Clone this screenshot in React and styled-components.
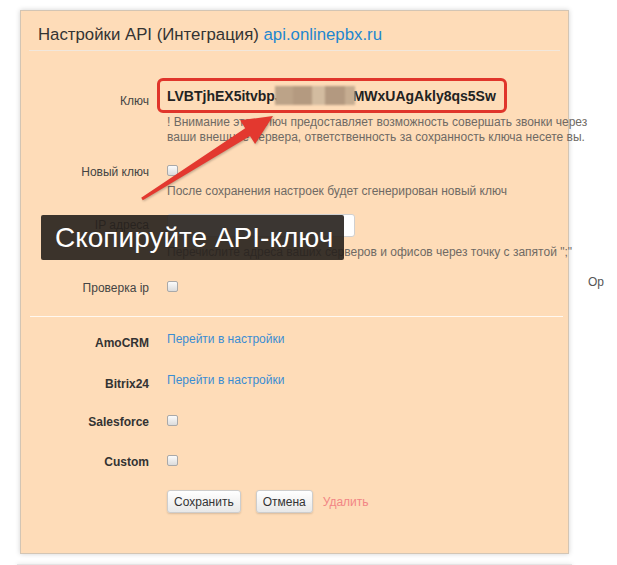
import React from 'react';
import styled, { createGlobalStyle } from 'styled-components';

const GlobalStyle = createGlobalStyle`
  html, body {
    margin: 0;
    padding: 0;
    background: #fff;
    overflow: hidden;
  }
  body {
    font-family: "Liberation Sans", Arial, sans-serif;
    color: #444;
  }
`;

const Page = styled.div`
  display: flex;
  align-items: flex-start;
  padding: 10px 0 0 20px;
  height: 565px;
  box-sizing: border-box;
`;

const Column = styled.div`
  display: flex;
  flex-direction: column;
`;

const Panel = styled.div`
  position: relative;
  width: 549px;
  height: 544px;
  box-sizing: border-box;
  background-color: #fedcb8;
  border: 1px solid #d3c5b4;
  box-shadow: 0 0 5px rgba(0, 0, 0, 0.18);
  display: flex;
  flex-direction: column;
`;

const NextPanel = styled.div`
  width: 555px;
  height: 20px;
  margin: 10px 0 0 -3px;
  background: #fafafa;
  border-top: 1px solid #e4e4e4;
  box-shadow: 0 0 5px rgba(0, 0, 0, 0.1);
`;

const Header = styled.div`
  margin: 0 8px;
  padding: 14px 0 5px 9px;
  border-bottom: 1px solid #f1e7dc;
  font-size: 16.8px;
  line-height: 20px;
  color: #333;

  a {
    color: #1f87cf;
    text-decoration: none;
  }
`;

const Row = styled.div`
  display: grid;
  grid-template-columns: 128px 1fr;
  column-gap: 18px;
  align-items: start;
  margin-top: ${(p) => p.$mt || 0}px;
`;

const Label = styled.div`
  text-align: right;
  font-size: 12px;
  line-height: 14px;
  padding-top: ${(p) => p.$pt || 0}px;
  font-weight: ${(p) => (p.$bold ? 'bold' : 'normal')};
  color: ${(p) => (p.$bold ? '#333' : '#444')};
`;

const KeyBox = styled.div`
  position: relative;
  margin-left: -10px;
  width: 350px;
  height: 35px;
  box-sizing: border-box;
  border: 3px solid #e0352b;
  border-radius: 6px;
  padding-left: 7px;
  display: flex;
  align-items: center;
  font-size: 14px;
  font-weight: bold;
  color: #222;
  white-space: nowrap;
`;

const Blur = styled.span`
  display: inline-block;
  width: 80px;
  height: 19px;
  margin-left: -8px;
  margin-right: -2px;
  background: linear-gradient(
    90deg,
    #bca388 0 22%,
    #b49a80 22% 46%,
    #d3bca0 46% 62%,
    #b39980 62% 88%,
    #c6ad91 88%
  );
  filter: blur(0.8px);
`;

const Help = styled.div`
  margin-top: ${(p) => p.$mt || 0}px;
  margin-left: 146px;
  font-size: 12px;
  line-height: 15px;
  color: #6f6a64;
  white-space: nowrap;
`;

const Check = styled.span`
  display: block;
  width: 11px;
  height: 11px;
  box-sizing: border-box;
  border: 1px solid #a9a9a9;
  border-radius: 2px;
  background: linear-gradient(#fbfbfb, #dcdcdc);
`;

const TextInput = styled.div`
  width: 188px;
  height: 23px;
  box-sizing: border-box;
  background: #fff;
  border: 1px solid #d0d0d0;
  border-radius: 3px;
`;

const Divider = styled.div`
  margin: ${(p) => p.$mt || 0}px 5px 0 9px;
  height: 1px;
  background: #fff8f0;
`;

const LinkText = styled.a`
  font-size: 12px;
  line-height: 14px;
  color: #3a8dd3;
  text-decoration: none;
`;

const Actions = styled.div`
  display: flex;
  align-items: center;
  gap: 15px;
`;

const Button = styled.button`
  height: 23px;
  padding: 0 6px;
  font-family: "Liberation Sans", Arial, sans-serif;
  font-size: 12px;
  color: #333;
  background: linear-gradient(#ffffff, #e8e8e8);
  border: 1px solid #cdcdcd;
  border-radius: 3px;
  box-shadow: 0 1px 2px rgba(0, 0, 0, 0.15);
`;

const DeleteLink = styled.span`
  font-size: 12px;
  color: #f28585;
  margin-left: -5px;
`;

const Callout = styled.div`
  position: absolute;
  left: 20px;
  top: 204px;
  width: 303px;
  height: 45px;
  background: rgba(38, 32, 28, 0.9);
  border-radius: 2px;
  color: #fff;
  font-size: 28px;
  line-height: 45px;
  padding-left: 14px;
  box-sizing: border-box;
  white-space: nowrap;
`;

const ArrowSvg = styled.svg`
  position: absolute;
  left: -20px;
  top: -10px;
  width: 617px;
  height: 565px;
  pointer-events: none;
  filter: drop-shadow(1px 1px 1px rgba(0, 0, 0, 0.25));
`;

const Side = styled.div`
  margin: 265px 0 0 16px;
  font-size: 12px;
  color: #555;
`;

const App = () => {
  return (
    <>
      <GlobalStyle />
      <Page>
        <Column>
          <Panel>
            <Header>
              Настройки API (Интеграция) <a href="#">api.onlinepbx.ru</a>
            </Header>

            <Row $mt={27}>
              <Label $pt={16}>Ключ</Label>
              <KeyBox>
                <span>LVBTjhEX5itvbpJ</span>
                <Blur />
                <span>MWxUAgAkly8qs5Sw</span>
              </KeyBox>
            </Row>
            <Help $mt={2}>
              ! Внимание этот ключ предоставляет возможность совершать звонки через
              <br />
              ваши внешние сервера, ответственность за сохранность ключа несете вы.
            </Help>

            <Row $mt={20}>
              <Label $pt={0}>Новый ключ</Label>
              <Check />
            </Row>
            <Help $mt={5}>После сохранения настроек будет сгенерирован новый ключ</Help>

            <Row $mt={15}>
              <Label $pt={4}>IP адреса</Label>
              <TextInput />
            </Row>
            <Help $mt={8}>Перечислите адреса ваших серверов и офисов через точку с запятой ";"</Help>

            <Row $mt={21}>
              <Label $pt={0}>Проверка ip</Label>
              <Check />
            </Row>

            <Divider $mt={21} />

            <Row $mt={15}>
              <Label $bold $pt={4}>AmoCRM</Label>
              <LinkText href="#">Перейти в настройки</LinkText>
            </Row>
            <Row $mt={23}>
              <Label $bold $pt={4}>Bitrix24</Label>
              <LinkText href="#">Перейти в настройки</LinkText>
            </Row>
            <Row $mt={24}>
              <Label $bold $pt={0}>Salesforce</Label>
              <Check />
            </Row>
            <Row $mt={26}>
              <Label $bold $pt={0}>Custom</Label>
              <Check />
            </Row>

            <Row $mt={21}>
              <span />
              <Actions>
                <Button>Сохранить</Button>
                <Button>Отмена</Button>
                <DeleteLink>Удалить</DeleteLink>
              </Actions>
            </Row>

            <Callout>Скопируйте API-ключ</Callout>
            <ArrowSvg viewBox="0 0 617 565">
              <polygon
                fill="#e3382f"
                points="140.2,196.7 244.2,127.3 239.1,119.3 272,115 254.1,142.9 249,134.9 141.8,199.3"
              />
            </ArrowSvg>
          </Panel>
          <NextPanel />
        </Column>
        <Side>Ор</Side>
      </Page>
    </>
  );
};

export default App;
